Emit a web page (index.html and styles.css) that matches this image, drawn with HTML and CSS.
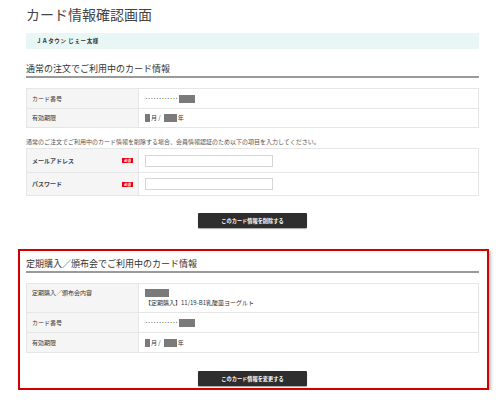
FILE: index.html
```html
<!DOCTYPE html>
<html lang="ja">
<head>
<meta charset="utf-8">
<title>カード情報確認画面</title>
<link rel="stylesheet" href="styles.css">
</head>
<body>
<div class="page">
  <h1 class="title">カード情報確認画面</h1>
  <div class="member">ＪＡタウン じぇー太様</div>

  <section class="block">
    <h2 class="heading">通常の注文でご利用中のカード情報</h2>
    <div class="info">
      <div class="row">
        <div class="label">カード番号</div>
        <div class="value"><span class="dots">････････････</span><span class="mask mask-num"></span></div>
      </div>
      <div class="row">
        <div class="label">有効期限</div>
        <div class="value"><span class="mask mask-month"></span><span class="unit">月 /</span><span class="mask mask-year"></span><span class="unit">年</span></div>
      </div>
    </div>
    <p class="note">通常のご注文でご利用中のカード情報を削除する場合、会員情報認証のため以下の項目を入力してください。</p>
    <div class="info form">
      <div class="row row-form">
        <div class="label label-form"><span>メールアドレス</span><span class="badge">必須</span></div>
        <div class="value"><input class="field" type="text"></div>
      </div>
      <div class="row row-form">
        <div class="label label-form"><span>パスワード</span><span class="badge">必須</span></div>
        <div class="value"><input class="field" type="password"></div>
      </div>
    </div>
    <div class="actions actions-first"><button class="btn" type="button">このカード情報を削除する</button></div>
  </section>

  <section class="block featured">
    <h2 class="heading">定期購入／頒布会でご利用中のカード情報</h2>
    <div class="info">
      <div class="row row-tall">
        <div class="label label-top">定期購入／頒布会内容</div>
        <div class="value value-stack"><span class="mask mask-name"></span><span class="item">【定期購入】11/19-B1乳酸菌ヨーグルト</span></div>
      </div>
      <div class="row row-mid">
        <div class="label">カード番号</div>
        <div class="value"><span class="dots">････････････</span><span class="mask mask-num"></span></div>
      </div>
      <div class="row row-mid">
        <div class="label">有効期限</div>
        <div class="value"><span class="mask mask-month"></span><span class="unit">月 /</span><span class="mask mask-year"></span><span class="unit">年</span></div>
      </div>
    </div>
    <div class="actions actions-second"><button class="btn" type="button">このカード情報を変更する</button></div>
  </section>
</div>
</body>
</html>
```
FILE: styles.css
```css
* { box-sizing: border-box; }
html, body { margin: 0; padding: 0; background: #fff; }
body {
  font-family: "Noto Sans CJK JP", "Noto Sans", sans-serif;
  color: #333;
}
.page {
  padding: 6px 21px 0 26px;
}
.title {
  margin: 0;
  font-size: 14px;
  line-height: 16px;
  font-weight: normal;
  color: #444;
}
.member {
  margin-top: 11px;
  height: 16px;
  line-height: 16px;
  padding-left: 10px;
  background: #e8f6f5;
  font-size: 5.5px;
  font-weight: bold;
  letter-spacing: 0.6px;
  color: #333;
}
.heading {
  margin: 14px 0 0;
  padding-bottom: 1px;
  font-size: 9px;
  line-height: 12px;
  font-weight: normal;
  color: #333;
  border-bottom: 2px solid #9a9a9a;
}
.info {
  margin-top: 10px;
  border: 1px solid #e6e6e6;
}
.row {
  display: grid;
  grid-template-columns: 112px 1fr;
  min-height: 19px;
  border-top: 1px solid #e6e6e6;
}
.row:first-child { border-top: 0; }
.row-form { min-height: 23px; }
.row-tall { min-height: 28px; }
.row-mid { min-height: 20px; }
.label {
  display: flex;
  align-items: center;
  padding-left: 5px;
  background: #f5f5f5;
  border-right: 1px solid #e6e6e6;
  font-size: 6px;
  line-height: 8px;
  color: #333;
}
.label-form {
  justify-content: space-between;
  padding-right: 5px;
  font-weight: bold;
  color: #444;
}
.label-top {
  align-items: flex-start;
  padding-top: 5px;
}
.value {
  display: flex;
  align-items: center;
  padding-left: 6px;
  font-size: 6px;
  line-height: 8px;
  color: #333;
}
.value-stack {
  flex-direction: column;
  align-items: flex-start;
  justify-content: flex-start;
  padding-top: 5px;
  gap: 2px;
}
.dots {
  font-size: 5.5px;
  color: #444;
}
.mask {
  display: inline-block;
  height: 8px;
  background: #7a7a7a;
}
.mask-num { width: 16px; margin-left: 1px; }
.mask-month { width: 5px; }
.mask-year { width: 13px; margin-left: 3px; }
.mask-name { width: 24px; }
.unit { margin-left: 1px; }
.note {
  margin: 10px 0 2px;
  font-size: 6px;
  line-height: 8px;
  color: #555;
}
.info.form { margin-top: 0; }
.badge {
  display: inline-block;
  width: 11px;
  height: 5px;
  line-height: 5px;
  background: #e60012;
  color: #fff;
  font-size: 3.5px;
  text-align: center;
}
.field {
  width: 128px;
  height: 12px;
  margin: 0;
  padding: 0 2px;
  border: 1px solid #d6d6d6;
  background: #fff;
}
.actions {
  display: flex;
  justify-content: center;
}
.actions-first { margin-top: 17px; }
.actions-second { margin-top: 18px; }
.btn {
  width: 109px;
  height: 15px;
  padding: 0;
  border: 0;
  border-radius: 1px;
  background: #2e2e2e;
  color: #fff;
  font-family: "Noto Sans CJK JP", sans-serif;
  font-size: 5.2px;
  font-weight: bold;
  box-shadow: 0 1px 1px rgba(0,0,0,0.35);
}
.featured {
  margin: 21px -10px 0 -8px;
  padding: 7px 8px 2px 6px;
  border: 2px solid #d40000;
  box-shadow: 2px 2px 3px rgba(0,0,0,0.25);
}
.featured .heading { margin-top: 0; }
```
